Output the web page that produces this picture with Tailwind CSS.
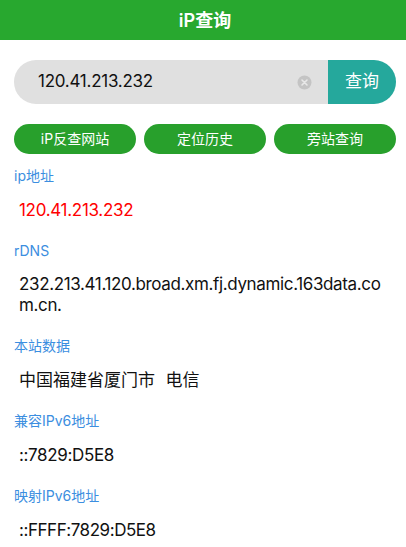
<!DOCTYPE html>
<html lang="zh-CN">
<head>
  <meta charset="UTF-8">
  <meta name="viewport" content="width=device-width, initial-scale=1.0">
  <title>iP查询</title>
  <script src="https://cdn.jsdelivr.net/npm/@tailwindcss/browser@4"></script>
</head>
<body class="bg-white overflow-hidden font-['Inter','Noto_Sans_CJK_SC',sans-serif] text-[#111]">
  <!-- 顶部标题 -->
  <header class="h-10 pl-1 bg-[#28a82f] text-white flex items-center justify-center text-[18px] font-semibold">iP查询</header>

  <!-- 搜索框 -->
  <div class="flex h-11 ml-3.5 mr-2.5 mt-5">
    <div class="flex-1 bg-[#e0e0e0] rounded-l-[22px] flex items-center pl-6 pr-4 justify-between">
      <span class="text-[17px] tracking-[-0.25px]">120.41.213.232</span>
      <svg class="w-[15px] h-[15px]" viewBox="0 0 15 15">
        <circle cx="7.5" cy="7.5" r="7" fill="#c4c4c4"/>
        <path d="M5 5l5 5M10 5l-5 5" stroke="#e8e8e8" stroke-width="1.6" stroke-linecap="round"/>
      </svg>
    </div>
    <button class="w-[68px] bg-[#25a89c] text-white text-[17px] rounded-r-[22px]">查询</button>
  </div>

  <!-- 快捷按钮 -->
  <div class="grid grid-cols-3 gap-2 ml-3.5 mr-2.5 mt-5">
    <button class="h-[30px] rounded-full bg-[#28a02c] text-white text-sm">iP反查网站</button>
    <button class="h-[30px] rounded-full bg-[#28a02c] text-white text-sm">定位历史</button>
    <button class="h-[30px] rounded-full bg-[#28a02c] text-white text-sm">旁站查询</button>
  </div>

  <!-- 查询结果 -->
  <div class="ml-3.5 mr-2.5 mt-[12px]">
    <div class="text-sm leading-5 text-[#3b8ee0]">ip地址</div>
    <div class="pl-[5px] pt-[13px] pb-[20px] text-[17px] leading-[22px] tracking-[-0.3px] text-[#ff0000]">120.41.213.232</div>

    <div class="text-sm leading-5 text-[#3b8ee0]">rDNS</div>
    <div class="pl-[5px] pr-2 pt-[13px] pb-[20px] text-[17px] leading-[21px] tracking-[-0.36px] break-all">232.213.41.120.broad.xm.fj.dynamic.163data.com.cn.</div>

    <div class="text-sm leading-5 text-[#3b8ee0]">本站数据</div>
    <div class="pl-[5px] pt-[13px] pb-[20px] text-[17px] leading-[22px] whitespace-pre [word-spacing:0.5px]">中国福建省厦门市  电信</div>

    <div class="text-sm leading-5 text-[#3b8ee0]">兼容IPv6地址</div>
    <div class="pl-[5px] pt-[13px] pb-[20px] text-[17px] leading-[22px] tracking-[-0.35px]">::7829:D5E8</div>

    <div class="text-sm leading-5 text-[#3b8ee0]">映射IPv6地址</div>
    <div class="pl-[5px] pt-[13px] pb-[20px] text-[17px] leading-[22px] tracking-[-0.45px]">::FFFF:7829:D5E8</div>
  </div>
</body>
</html>
